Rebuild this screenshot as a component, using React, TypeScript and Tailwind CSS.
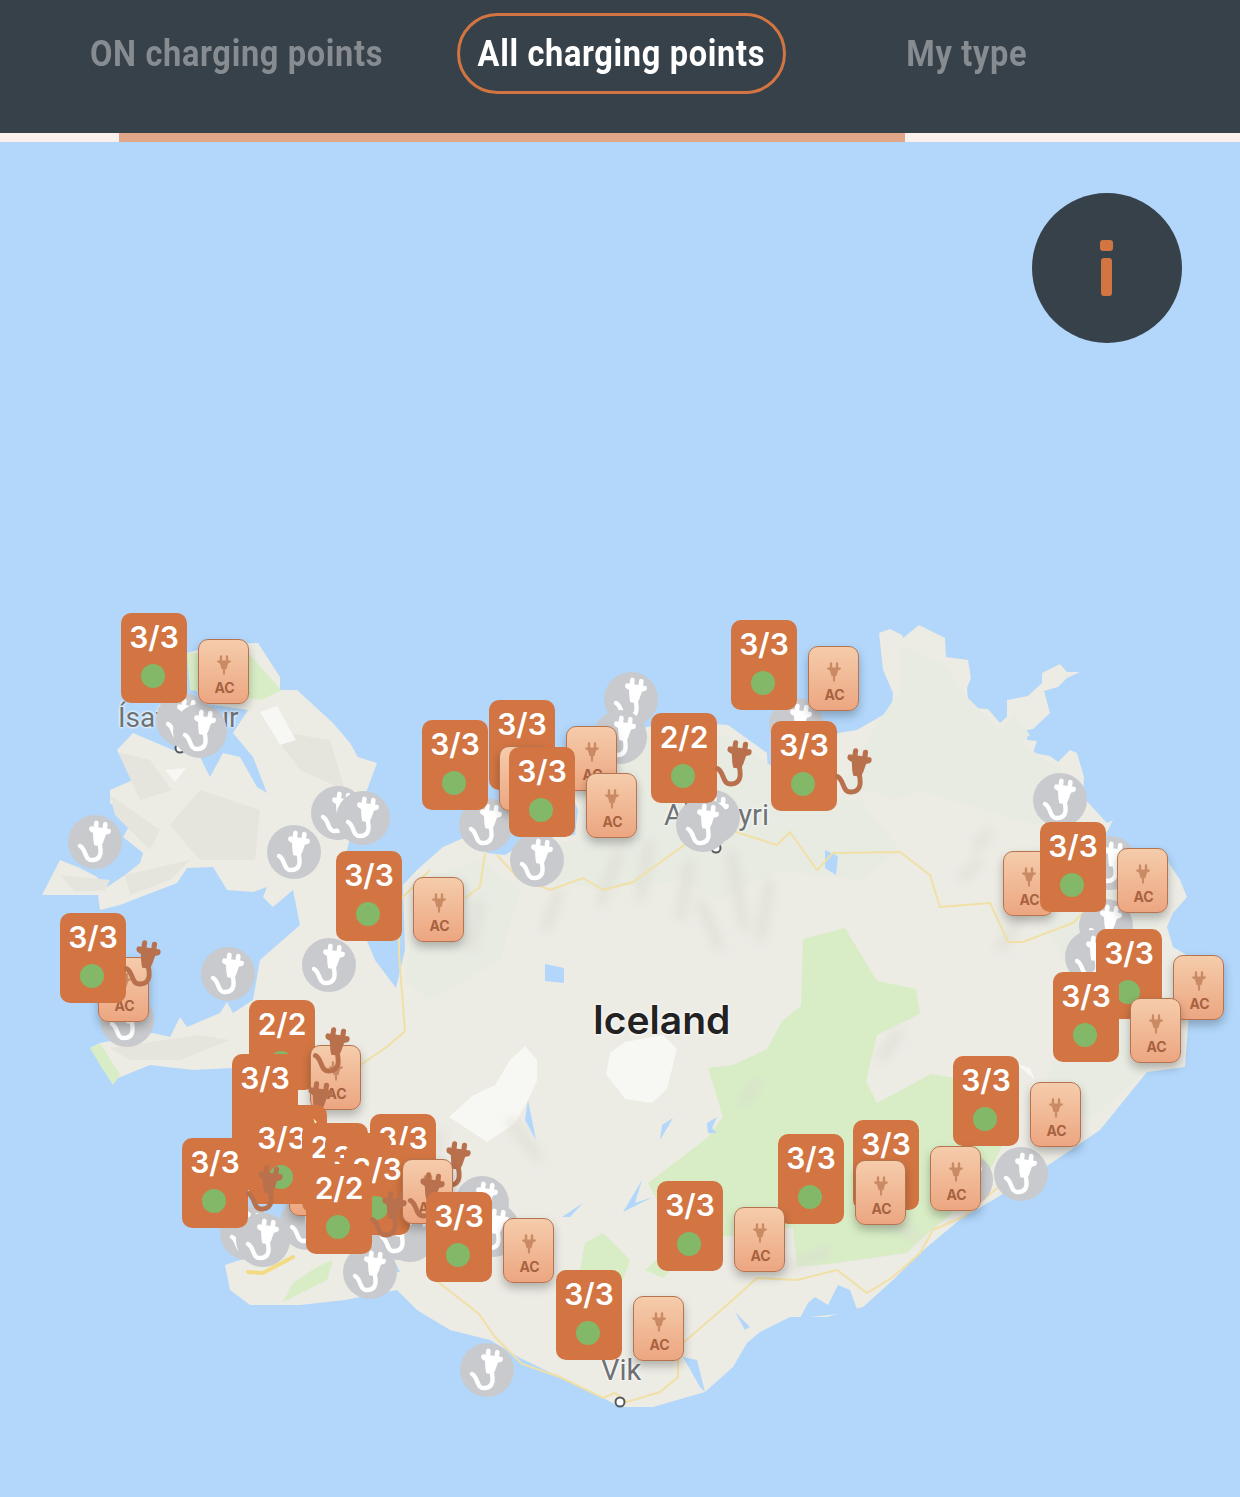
import React from "react";

const Y0 = 142;

const LAND =
  "187,653 215,645 258,643 280,677 280,690 297,690 333,723 350,743 358,757 377,763 367,790 352,830 342,870 352,905 375,960 396,988 405,950 403,885 417,870 443,847 470,835 487,853 505,855 530,840 575,835 578,810 570,790 600,770 610,740 647,727 690,722 728,725 767,753 768,780 810,795 838,733 857,730 883,715 892,707 893,693 883,670 879,633 890,629 902,635 903,638 919,625 945,638 946,657 968,660 971,678 967,688 968,700 975,708 988,709 1000,723 1007,717 1007,700 1028,696 1042,683 1042,673 1060,664 1067,672 1080,672 1067,678 1058,687 1044,691 1050,713 1033,729 1027,730 1027,740 1037,741 1033,753 1050,756 1058,762 1070,750 1077,753 1084,777 1083,797 1107,823 1113,820 1103,840 1130,850 1167,860 1180,880 1187,897 1173,913 1167,927 1173,947 1190,957 1175,968 1190,1000 1185,1067 1147,1072 1100,1130 1053,1162 993,1200 963,1217 920,1253 893,1280 863,1307 827,1317 790,1317 760,1332 747,1343 733,1367 705,1392 653,1407 620,1407 607,1400 580,1387 560,1377 520,1358 490,1340 450,1330 417,1310 397,1290 345,1300 300,1305 250,1305 230,1290 225,1265 270,1250 290,1215 300,1190 285,1150 260,1100 233,1068 193,1070 150,1065 113,1080 100,1063 90,1048 100,1043 153,1033 170,1037 180,1017 187,1027 220,1013 227,1002 233,1013 253,1000 260,960 300,925 293,890 273,907 263,897 267,887 253,892 227,890 213,867 187,868 177,883 120,905 100,910 98,895 42,895 60,860 80,868 97,877 107,887 125,875 140,863 143,853 123,837 133,820 110,803 110,790 133,780 117,750 133,733 173,750 200,757 210,777 223,753 240,757 257,787 267,793 253,757 233,733 248,710 200,703";

const PALE = [
  "900,645 945,665 965,695 1000,730 1015,715 1030,735 1020,742 1060,770 1085,800 1060,830 1000,815 920,790 895,800 870,790 840,800 850,770 880,720 900,690",
  "640,735 730,735 770,765 790,800 860,800 900,850 860,880 780,870 720,900 680,880 600,890 560,880 520,850 580,840 590,790 615,750",
  "420,880 480,860 520,890 500,960 430,1000 405,980",
  "1010,860 1090,820 1110,840 1170,880 1150,960 1170,1050 1090,1120 1040,1100 1080,990",
];

const GREEN = [
  "648,1183 707,1138 723,1117 708,1068 733,1065 767,1049 782,1021 801,1006 803,939 845,928 877,981 916,989 920,1014 877,1035 866,1081 877,1103 931,1074 954,1078 1020,1110 985,1180 950,1215 920,1240 907,1253 837,1263 797,1267 793,1227 700,1240 663,1278 645,1270 660,1257 665,1215",
  "603,1233 630,1260 623,1280 580,1270 585,1243",
  "317,1267 333,1260 327,1280 283,1302 293,1283",
  "90,1048 100,1043 120,1075 113,1085 100,1065",
  "187,653 250,655 281,690 262,700 190,690",
];

const WHITE = [
  "525,1046 537,1060 537,1081 525,1106 514,1124 487,1142 449,1117 472,1096 495,1085 510,1060",
  "610,1053 625,1042 663,1035 677,1049 667,1089 652,1103 625,1099 606,1074",
  "260,712 277,706 296,740 280,745",
  "165,770 186,768 175,782",
  "1015,1063 1030,1068 1035,1080",
];

const FACETS = [
  "118,752 150,760 172,790 140,800",
  "200,790 260,810 255,860 200,860 170,825",
  "110,795 160,830 150,850 115,815",
  "60,875 110,880 105,890 75,892",
  "125,875 190,860 170,880 130,895",
  "110,1048 200,1035 230,1040 180,1060 130,1060",
  "270,730 330,740 345,790 300,770",
];

const LAKES = [
  "545,964 564,968 564,983 545,981",
  "660,1140 673,1118 662,1125",
  "623,1212 642,1180 635,1203 653,1197",
  "562,1217 583,1203 570,1217",
  "707,1123 717,1117 712,1128 717,1133 708,1133",
  "735,1312 750,1327 745,1330",
  "683,1357 697,1360 705,1392 700,1387",
  "808,1303 815,1297 828,1305 838,1285 850,1290 858,1312 800,1318",
  "905,1275 915,1270 918,1280 905,1287",
  "825,850 838,856 836,875 825,868",
  "525,1120 528,1100 536,1140",
  "393,1258 400,1272 380,1272",
];

const ROADS = [
  "399,953 405,1031 388,1046 353,1070",
  "399,953 400,900 430,870",
  "485,853 480,887 465,898",
  "497,855 517,877 550,890 583,878 603,890 633,882 687,843 730,830 777,845 790,832 817,870 833,853 900,852 930,875 940,907 990,903 1008,942 1023,942 1073,923 1100,895",
  "683,1343 727,1305 757,1278 797,1280 837,1270 867,1293 893,1277 920,1253 933,1230 963,1217 1003,1183",
  "437,1281 479,1314 495,1337 522,1364 560,1377 603,1398 615,1393 627,1402 660,1392 678,1377 678,1360",
];

const BLUR = [
  "650,840 640,900", "690,860 680,920", "730,850 745,930", "770,880 760,940", "620,850 600,905",
  "700,900 720,950", "560,890 545,930", "480,900 470,950", "510,1120 540,1160", "430,1180 440,1130",
  "780,1270 830,1250", "880,1215 920,1240", "900,1030 880,1060", "740,1105 760,1080", "1000,950 1030,900",
  "975,850 990,830", "960,880 980,860",
];

type Pin =
  | { k: "m"; x: number; y: number; t?: string }
  | { k: "a"; x: number; y: number }
  | { k: "p"; x: number; y: number };

const m = (x: number, y: number, t = "3/3"): Pin => ({ k: "m", x, y, t });
const a = (x: number, y: number): Pin => ({ k: "a", x, y });
const p = (x: number, y: number): Pin => ({ k: "p", x: x + 53, y: y + 21 });

const CIRCLES: [number, number][] = [
  [631, 699], [183, 720], [796, 725], [200, 731], [620, 737], [1060, 800], [338, 813], [713, 817], [363, 818],
  [486, 825], [703, 825], [95, 842], [294, 852], [537, 860], [1110, 863], [1106, 926], [1092, 957], [329, 965],
  [228, 974], [127, 1020], [1021, 1174], [966, 1180], [482, 1203], [307, 1223], [247, 1233], [410, 1235], [397, 1233],
  [493, 1230], [263, 1240], [370, 1272], [487, 1370],
];

const PINS: Pin[] = [
  a(1003, 851), a(98, 957),
  m(121, 613), a(198, 639), m(731, 620), a(808, 646), m(489, 700), a(566, 726), m(422, 720), a(499, 746),
  m(651, 713, "2/2"), p(651, 713), m(771, 721), p(771, 721), m(509, 747), a(586, 773), m(1040, 822), a(1117, 848),
  m(336, 851), a(413, 877), m(60, 913), p(60, 913), m(1096, 929), a(1173, 955), m(1053, 972), a(1130, 998),
  m(249, 1000, "2/2"), a(310, 1045), p(249, 1000), m(953, 1056), a(1030, 1082), m(232, 1054), p(232, 1054),
  m(232, 1100, ""), m(261, 1105), a(289, 1151), m(249, 1114), m(370, 1114), p(370, 1114), m(853, 1120), m(302, 1123, "2/2"),
  m(325, 1133), m(778, 1134), a(855, 1160), m(182, 1138), p(182, 1138), m(344, 1145), a(402, 1159), p(344, 1145),
  a(930, 1146), m(306, 1164, "2/2"), p(306, 1164), m(657, 1181), a(734, 1207), m(426, 1192), a(503, 1218),
  m(556, 1270), a(633, 1296),
];

function CordPlug({ color }: { color: string }) {
  return (
    <svg viewBox="0 0 54 54" className="w-full h-full">
      <g transform="rotate(8 32 15)">
        <path d="M27.5 14V8.5M36.5 14V8.5" stroke={color} strokeWidth="4.6" strokeLinecap="round" fill="none" />
        <path d="M22 12.5H42Q44 15 42 17.5L38.5 19L37 26.5L35.5 31H28.5L27 26.5L25.5 19L22 17.5Q20 15 22 12.5Z" fill={color} />
      </g>
      <path d="M31.5 28C33 35 34.5 44.5 24.5 45C16 45.5 18.5 34 12 31" stroke={color} strokeWidth="4.4" strokeLinecap="round" fill="none" />
    </svg>
  );
}

function SmallPlug() {
  return (
    <svg viewBox="0 0 16 20" className="w-4 h-5">
      <path d="M5 6V1.5M11 6V1.5" stroke="#c98a64" strokeWidth="2.4" strokeLinecap="round" fill="none" />
      <path d="M1.5 5.5H14.5L15 7L12 8.5L10.5 14H9.2L9 19.5H7L6.8 14H5.5L4 8.5L1 7Z" fill="#c98a64" />
    </svg>
  );
}

function Marker({ x, y, t }: { x: number; y: number; t?: string }) {
  return (
    <div
      className="absolute w-[66px] h-[90px] rounded-[10px] bg-[#d27542] flex flex-col items-center pt-[6px]"
      style={{ left: x, top: y - Y0 }}
    >
      <span className="min-h-[36px] text-[30px] leading-[36px] font-semibold text-white font-['Inter',sans-serif]">{t}</span>
      <span className="mt-[9px] -ml-[2px] w-6 h-6 rounded-full bg-[#83b868]" />
    </div>
  );
}

function AcChip({ x, y }: { x: number; y: number }) {
  return (
    <div
      className="absolute w-[51px] h-[65px] rounded-[10px] border border-[#b57350] bg-gradient-to-b from-[#f5ccab] to-[#eca681] shadow-[0_5px_10px_rgba(0,0,0,0.25)] flex flex-col items-center pt-[15px]"
      style={{ left: x, top: y - Y0 }}
    >
      <SmallPlug />
      <span className="mt-[3px] ml-[2px] text-[14px] leading-[20px] font-bold text-[#a9623f] font-['Inter',sans-serif]">AC</span>
    </div>
  );
}

function Tab({ label, active, className }: { label: string; active?: boolean; className: string }) {
  return (
    <div
      className={`h-[81px] flex items-center justify-center rounded-[41px] font-['Roboto',sans-serif] font-bold ${
        active ? "border-[3px] border-[#d27542] text-white" : "text-[#868c90]"
      } ${className}`}
    >
      <span className="inline-block whitespace-nowrap scale-x-[0.88] text-[37px] tracking-[0.75px]">{label}</span>
    </div>
  );
}

export default function App() {
  return (
    <div className="w-[1240px] h-[1497px] overflow-hidden bg-white">
      <header className="h-[133px] bg-[#374149] flex items-start pt-[13px]">
        <Tab label="ON charging points" className="ml-[91px] w-[291px]" />
        <Tab label="All charging points" active className="ml-[75px] w-[329px]" />
        <Tab label="My type" className="ml-[120px] w-[121px]" />
      </header>
      <div className="h-[9px] bg-[#faf1ec] flex">
        <div className="ml-[119px] w-[786px] bg-[#e0a688]" />
      </div>
      <main className="relative h-[1355px] overflow-hidden bg-[#b2d7fb]">
        <svg viewBox={`0 ${Y0} 1240 1355`} className="absolute inset-0 w-[1240px] h-[1355px]">
          <defs>
            <filter id="soft" x="-20%" y="-20%" width="140%" height="140%">
              <feGaussianBlur stdDeviation="6" />
            </filter>
          </defs>
          <polygon points={LAND} fill="#ecebe4" />
          {PALE.map((q, i) => (
            <polygon key={i} points={q} fill="#e8ebe2" />
          ))}
          {GREEN.map((q, i) => (
            <polygon key={i} points={q} fill="#d8edc5" />
          ))}
          {FACETS.map((q, i) => (
            <polygon key={i} points={q} fill="#e6e5dd" />
          ))}
          {WHITE.map((q, i) => (
            <polygon key={i} points={q} fill="#f7f7f3" />
          ))}
          <g filter="url(#soft)">
            {BLUR.map((q, i) => (
              <polyline key={i} points={q} stroke="#dadad2" strokeWidth="6" fill="none" />
            ))}
          </g>
          {LAKES.map((q, i) => (
            <polygon key={i} points={q} fill="#b2d7fb" />
          ))}
          {ROADS.map((q, i) => (
            <polyline key={i} points={q} stroke="#f1e0a6" strokeWidth="2" fill="none" />
          ))}
          <polyline points="248,1272 263,1273 293,1257" stroke="#f3db86" strokeWidth="4" strokeLinecap="round" fill="none" />
          <circle cx="620" cy="1402" r="4.5" fill="#fff" stroke="#55595c" strokeWidth="2" />
          <circle cx="180" cy="748" r="4.5" fill="#fff" stroke="#55595c" strokeWidth="2" />
          <circle cx="716" cy="848" r="4.5" fill="#fff" stroke="#55595c" strokeWidth="2" />
        </svg>

        <span className="absolute left-[118px] top-[558px] text-[28px] leading-[36px] text-[#6d7275] font-['Roboto',sans-serif] [text-shadow:0_0_3px_#fff,0_0_3px_#fff]">Ísafjörður</span>
        <span className="absolute left-[664px] top-[655px] text-[29px] leading-[36px] text-[#6d7275] font-['Roboto',sans-serif] [text-shadow:0_0_3px_#fff,0_0_3px_#fff]">Akureyri</span>
        <span className="absolute left-[601px] top-[1210px] text-[29px] leading-[36px] text-[#6d7275] font-['Roboto',sans-serif] [text-shadow:0_0_3px_#fff,0_0_3px_#fff]">Vik</span>
        <span className="absolute left-[593px] top-[854px] text-[39px] leading-[48px] font-semibold text-[#222222] font-['Inter',sans-serif] [text-shadow:0_0_3px_#fff,0_0_3px_#fff]">Iceland</span>

        {CIRCLES.map(([cx, cy], i) => (
          <div
            key={i}
            className="absolute w-[54px] h-[54px] rounded-full bg-[#c8cacd]"
            style={{ left: cx - 27, top: cy - 27 - Y0 }}
          >
            <CordPlug color="#ffffff" />
          </div>
        ))}

        {PINS.map((pin, i) => {
          if (pin.k === "m") return <Marker key={i} x={pin.x} y={pin.y} t={pin.t} />;
          if (pin.k === "a") return <AcChip key={i} x={pin.x} y={pin.y} />;
          return (
            <div key={i} className="absolute w-[60px] h-[60px]" style={{ left: pin.x, top: pin.y - Y0 }}>
              <CordPlug color="#b9714d" />
            </div>
          );
        })}

        <div className="absolute left-[1032px] top-[51px] w-[150px] h-[150px] pr-[1px] rounded-full bg-[#374149] flex flex-col items-center justify-center gap-[7px]">
          <div className="w-[13px] h-[11px] rounded-[3px] bg-[#d27542]" />
          <div className="w-[11px] h-[38px] rounded-[3px] bg-[#d27542]" />
        </div>
      </main>
    </div>
  );
}
